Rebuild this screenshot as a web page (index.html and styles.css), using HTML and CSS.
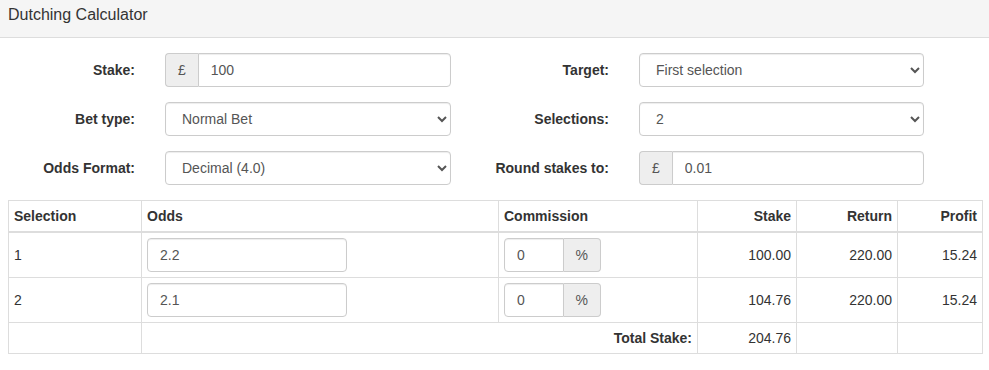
FILE: index.html
```html
<!DOCTYPE html>
<html>
  <head>
    <title>Dutching Calculator</title>
    <link rel="stylesheet" href="styles.css">
  </head>
  <body>
    <div class="panel-heading">Dutching Calculator</div>

    <form class="calc-form">
      <label class="control-label" for="stake">Stake:</label>
      <div class="input-group">
        <span class="addon addon-left">£</span>
        <input type="text" id="stake" class="form-control" value="100">
      </div>
      <label class="control-label" for="target">Target:</label>
      <select id="target" class="form-control">
        <option>First selection</option>
        <option>Equal profit</option>
      </select>

      <label class="control-label" for="betType">Bet type:</label>
      <select id="betType" class="form-control">
        <option>Normal Bet</option>
        <option>Each Way</option>
      </select>
      <label class="control-label" for="selections">Selections:</label>
      <select id="selections" class="form-control">
        <option>2</option>
        <option>3</option>
        <option>4</option>
      </select>

      <label class="control-label" for="oddsFormat">Odds Format:</label>
      <select id="oddsFormat" class="form-control">
        <option>Decimal (4.0)</option>
        <option>Fractional (3/1)</option>
      </select>
      <label class="control-label" for="roundTo">Round stakes to:</label>
      <div class="input-group">
        <span class="addon addon-left">£</span>
        <input type="text" id="roundTo" class="form-control" value="0.01">
      </div>
    </form>

    <table class="calc-table">
      <colgroup>
        <col class="col-sel">
        <col class="col-odds">
        <col class="col-comm">
        <col class="col-stake">
        <col class="col-return">
        <col class="col-profit">
      </colgroup>
      <thead>
        <tr>
          <th>Selection</th>
          <th>Odds</th>
          <th>Commission</th>
          <th class="num">Stake</th>
          <th class="num">Return</th>
          <th class="num">Profit</th>
        </tr>
      </thead>
      <tbody>
        <tr>
          <td>1</td>
          <td><input type="text" class="form-control odds-input" value="2.2"></td>
          <td>
            <div class="input-group comm-group">
              <input type="text" class="form-control" value="0">
              <span class="addon addon-right">%</span>
            </div>
          </td>
          <td class="num">100.00</td>
          <td class="num">220.00</td>
          <td class="num">15.24</td>
        </tr>
        <tr>
          <td>2</td>
          <td><input type="text" class="form-control odds-input" value="2.1"></td>
          <td>
            <div class="input-group comm-group">
              <input type="text" class="form-control" value="0">
              <span class="addon addon-right">%</span>
            </div>
          </td>
          <td class="num">104.76</td>
          <td class="num">220.00</td>
          <td class="num">15.24</td>
        </tr>
        <tr>
          <td></td>
          <td colspan="2" class="num total-label">Total Stake:</td>
          <td class="num">204.76</td>
          <td></td>
          <td></td>
        </tr>
      </tbody>
    </table>
  </body>
</html>
```

FILE: styles.css
```css
body {
  font-family: "Liberation Sans", Arial, sans-serif;
  font-size: 14px;
  line-height: 20px;
  color: #333;
  margin: 0;
}

.panel-heading {
  height: 38px;
  box-sizing: border-box;
  padding: 6px 8px 0;
  font-size: 16px;
  line-height: 18px;
  background-color: #f5f5f5;
  border-bottom: 1px solid #ddd;
}

.calc-form {
  display: grid;
  grid-template-columns: 135px 286px 128px 285px;
  column-gap: 30px;
  row-gap: 15px;
  align-items: center;
  padding-top: 15px;
}

.control-label {
  font-weight: bold;
  text-align: right;
}

.form-control {
  display: block;
  width: 100%;
  height: 34px;
  box-sizing: border-box;
  padding: 6px 12px;
  font-family: inherit;
  font-size: 14px;
  line-height: 20px;
  color: #555;
  background-color: #fff;
  border: 1px solid #ccc;
  border-radius: 4px;
  box-shadow: inset 0 1px 1px rgba(0, 0, 0, 0.075);
}

.input-group {
  display: flex;
}

.input-group .form-control {
  flex: 1;
  min-width: 0;
}

.addon {
  display: flex;
  align-items: center;
  height: 34px;
  box-sizing: border-box;
  padding: 0 12px;
  color: #555;
  background-color: #eee;
  border: 1px solid #ccc;
}

.addon-left {
  border-radius: 4px 0 0 4px;
  border-right: none;
}

.addon-left + .form-control {
  border-radius: 0 4px 4px 0;
}

.addon-right {
  border-radius: 0 4px 4px 0;
  border-left: none;
}

.comm-group {
  width: 97px;
}

.comm-group .form-control {
  border-radius: 4px 0 0 4px;
}

.odds-input {
  width: 200px;
}

.calc-table {
  width: 974px;
  margin: 15px 0 0 8px;
  border-collapse: collapse;
  table-layout: fixed;
}

.col-sel { width: 133px; }
.col-odds { width: 357px; }
.col-comm { width: 199px; }
.col-stake { width: 99px; }
.col-return { width: 101px; }
.col-profit { width: 85px; }

.calc-table th,
.calc-table td {
  padding: 5px;
  border: 1px solid #ddd;
  text-align: left;
  vertical-align: middle;
}

.calc-table th {
  border-bottom: 2px solid #ddd;
}

.calc-table .num {
  text-align: right;
}

.total-label {
  font-weight: bold;
}
```
